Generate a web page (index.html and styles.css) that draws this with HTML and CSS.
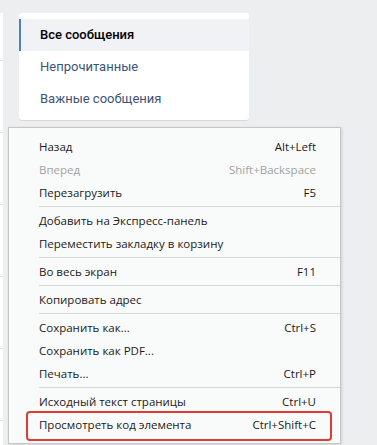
FILE: index.html
```html
<!DOCTYPE html>
<html lang="ru">
<head>
<meta charset="UTF-8">
<meta name="viewport" content="width=device-width, initial-scale=1.0">
<title>Сообщения</title>
<link rel="stylesheet" href="styles.css">
</head>
<body>
<div class="page">
  <div class="side">
    <div class="side-block first"></div>
    <div class="side-block"></div>
    <div class="side-block"></div>
    <div class="side-block"></div>
    <div class="side-block"></div>
    <div class="side-block"></div>
  </div>
  <div class="card">
    <div class="card-item selected">Все сообщения</div>
    <div class="card-item">Непрочитанные</div>
    <div class="card-item">Важные сообщения</div>
  </div>
</div>

<!-- Context menu -->
<div class="menu">
  <div class="row"><span>Назад</span><span>Alt+Left</span></div>
  <div class="row disabled"><span>Вперед</span><span>Shift+Backspace</span></div>
  <div class="row"><span>Перезагрузить</span><span>F5</span></div>
  <div class="sep"></div>
  <div class="row"><span>Добавить на Экспресс-панель</span></div>
  <div class="row"><span>Переместить закладку в корзину</span></div>
  <div class="sep"></div>
  <div class="row"><span>Во весь экран</span><span>F11</span></div>
  <div class="sep"></div>
  <div class="row"><span>Копировать адрес</span></div>
  <div class="sep"></div>
  <div class="row"><span>Сохранить как...</span><span>Ctrl+S</span></div>
  <div class="row"><span>Сохранить как PDF...</span></div>
  <div class="row"><span>Печать...</span><span>Ctrl+P</span></div>
  <div class="sep"></div>
  <div class="row"><span>Исходный текст страницы</span><span>Ctrl+U</span></div>
  <div class="row"><span>Просмотреть код элемента</span><span>Ctrl+Shift+C</span></div>
</div>

<!-- Highlight around the last item -->
<div class="highlight"></div>
</body>
</html>
```

FILE: styles.css
```css
body {
  margin: 0;
  background-color: #edeef0;
  font-family: Roboto, "Open Sans", Arial, sans-serif;
  height: 445px;
  overflow: hidden;
  position: relative;
}

.page {
  display: flex;
  padding-top: 13px;
}

.side {
  width: 3px;
  height: 432px;
  background-color: #fff;
}

.side-block {
  height: 71px;
  border-bottom: 1px solid #e4e6ea;
}

.side-block.first {
  height: 47px;
}

.card {
  width: 230px;
  margin-left: 16px;
  padding: 6px 0 5px;
  background-color: #fff;
  border-radius: 3px;
  box-shadow: 0 1px 0 0 #d7d8db;
  align-self: flex-start;
}

.card-item {
  height: 32px;
  line-height: 32px;
  padding-left: 21px;
  font-size: 13px;
  color: #3c5478;
}

.card-item.selected {
  background-color: #f0f2f5;
  border-left: 2px solid #5181b8;
  padding-left: 19px;
  color: #000;
  font-weight: 500;
}

/* Browser context menu */
.menu {
  position: absolute;
  left: 8px;
  top: 127px;
  width: 331px;
  padding: 7px 0;
  background-color: #f9fafa;
  border: 1px solid #c6c6c6;
  box-shadow: 1px 1px 3px rgba(0, 0, 0, 0.12);
  font-family: "Open Sans", "Noto Sans", sans-serif;
  font-size: 11.5px;
  color: #1b1b1b;
}

.row {
  display: flex;
  justify-content: space-between;
  height: 23px;
  line-height: 23px;
  padding: 0 24px 0 30px;
}

.row.disabled {
  color: #a2a2a2;
}

.sep {
  height: 1px;
  margin: 2px 0 2px 30px;
  background-color: #d6d6d6;
}

.highlight {
  position: absolute;
  left: 26px;
  top: 411px;
  width: 306px;
  height: 30px;
  box-sizing: border-box;
  border: 2px solid #e03c34;
  border-radius: 4px;
}
```
